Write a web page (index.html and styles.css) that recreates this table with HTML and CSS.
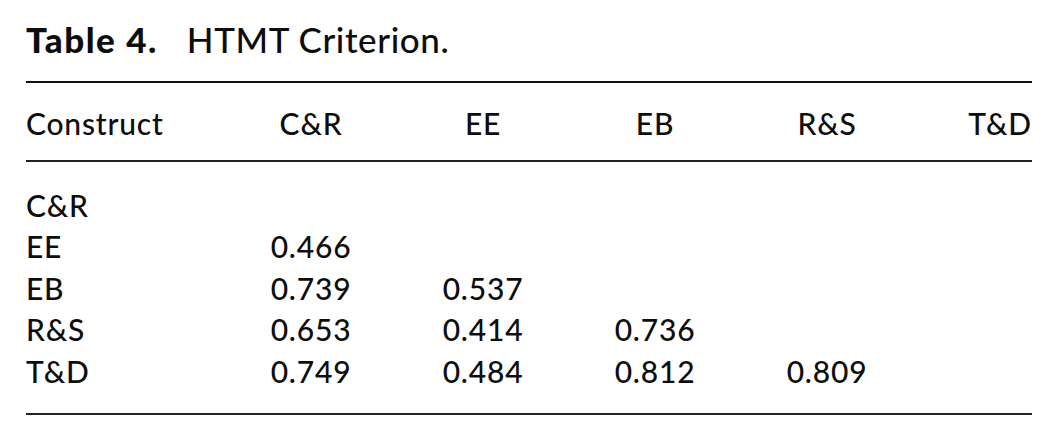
FILE: index.html
```html
<!DOCTYPE html>
<html lang="en">
<head>
  <meta charset="UTF-8">
  <meta name="viewport" content="width=device-width, initial-scale=1.0" />
  <title>Table 4. HTMT Criterion.</title>
  <link rel="stylesheet" href="styles.css">
</head>
<body>
  <div class="table-wrap">
    <h2 class="caption"><b>Table 4.</b>HTMT Criterion.</h2>
    <table class="htmt">
      <colgroup>
        <col class="col-name">
        <col class="col-val">
        <col class="col-val">
        <col class="col-val">
        <col class="col-val">
        <col class="col-last">
      </colgroup>
      <thead>
        <tr>
          <th>Construct</th>
          <th>C&amp;R</th>
          <th>EE</th>
          <th>EB</th>
          <th>R&amp;S</th>
          <th>T&amp;D</th>
        </tr>
      </thead>
      <tbody>
        <tr><td>C&amp;R</td><td></td><td></td><td></td><td></td><td></td></tr>
        <tr><td>EE</td><td>0.466</td><td></td><td></td><td></td><td></td></tr>
        <tr><td>EB</td><td>0.739</td><td>0.537</td><td></td><td></td><td></td></tr>
        <tr><td>R&amp;S</td><td>0.653</td><td>0.414</td><td>0.736</td><td></td><td></td></tr>
        <tr><td>T&amp;D</td><td>0.749</td><td>0.484</td><td>0.812</td><td>0.809</td><td></td></tr>
      </tbody>
    </table>
  </div>
</body>
</html>
```

FILE: styles.css
```css
body {
  margin: 0;
  background: #fff;
  color: #0d0d0d;
  font-family: Lato, "Open Sans", sans-serif;
}

.table-wrap {
  width: 1006px;
  padding: 19px 0 0 26px;
}

.caption {
  margin: 0 0 22px;
  font-size: 35px;
  line-height: 40px;
  font-weight: 500;
  letter-spacing: 0.6px;
}

.caption b {
  font-weight: 900;
  letter-spacing: 1.5px;
  margin-right: 29px;
}

.htmt {
  width: 1006px;
  table-layout: fixed;
  border-collapse: collapse;
  border-top: 2px solid #111;
  border-bottom: 2px solid #222;
  font-size: 30px;
  line-height: 41.5px;
  letter-spacing: 0.8px;
}

.col-name { width: 199px; }
.col-val { width: 172px; }
.col-last { width: 119px; }

.htmt th,
.htmt td {
  padding: 0;
  font-weight: 500;
  text-align: center;
  white-space: nowrap;
}

.htmt th:first-child,
.htmt td:first-child {
  text-align: left;
}

.htmt th:last-child {
  text-align: right;
}

.htmt thead th {
  padding: 20px 0 15px;
  border-bottom: 2px solid #222;
}

.htmt tbody tr:first-child td {
  padding-top: 23px;
}

.htmt tbody tr:last-child td {
  padding-bottom: 21px;
}
```
